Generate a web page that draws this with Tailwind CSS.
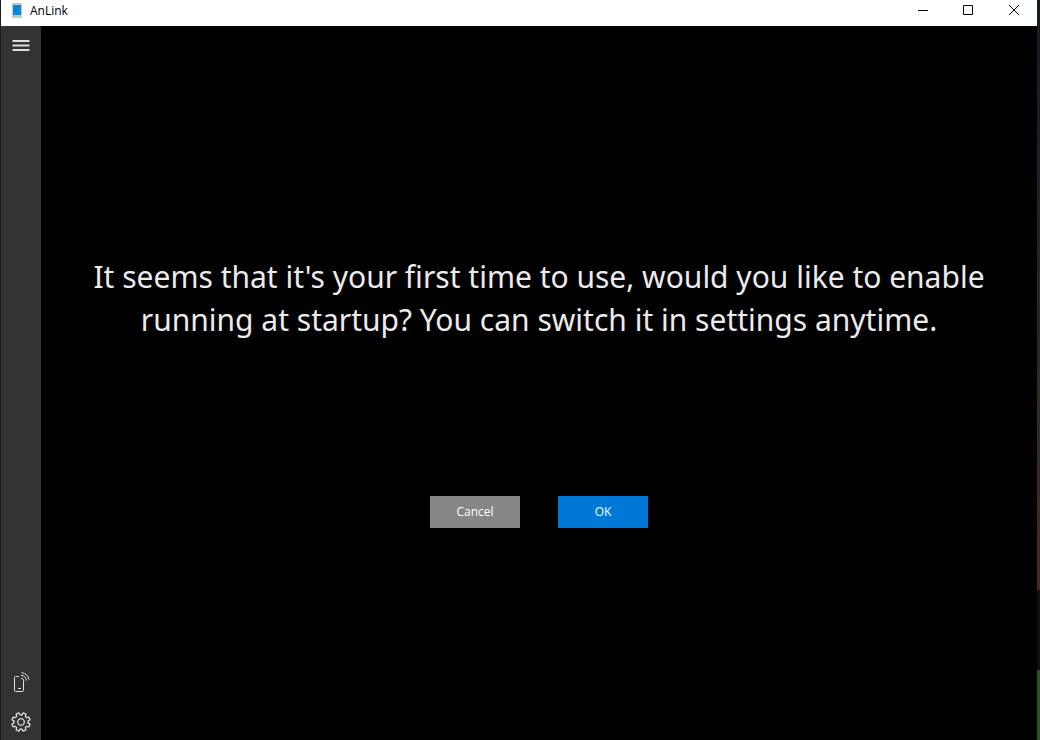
<!DOCTYPE html>
<html lang="en">
<head>
<meta charset="utf-8">
<title>AnLink</title>
<script src="https://cdn.jsdelivr.net/npm/@tailwindcss/browser@4"></script>
</head>
<body class="flex min-h-screen bg-[#1d1d1d] pl-px font-['Noto_Sans','Open_Sans',sans-serif]">
<div class="flex min-w-0 flex-1 flex-col bg-black">
  <header class="flex h-[26px] items-start justify-between bg-white text-black">
    <div class="flex h-[22px] items-center gap-2 pl-[11px]">
      <svg class="h-4 w-[10px]" viewBox="0 0 10 16" aria-hidden="true">
        <rect y="-1" width="10" height="16" rx="1" fill="#b9cad3"/>
        <rect x="1" y="2" width="8" height="10" fill="#0c8bdc"/>
        <path d="M3 9a3 3 0 0 1 3-3M3 6a5 5 0 0 1 5-3" fill="none" stroke="#0874bd"/>
      </svg>
      <h1 class="font-['Open_Sans','Noto_Sans',sans-serif] text-xs">AnLink</h1>
    </div>
    <div class="flex">
      <button class="flex h-5 w-11 items-center justify-center" aria-label="Minimize">
        <svg class="size-[10px]" viewBox="0 0 10 10" fill="none" stroke="#000"><path d="M0 5.5h10"/></svg>
      </button>
      <button class="flex h-5 w-[46px] items-center justify-center" aria-label="Maximize">
        <svg class="size-[10px]" viewBox="0 0 10 10" fill="none" stroke="#000"><path d="M.5.5h9v9h-9z"/></svg>
      </button>
      <button class="flex h-5 w-[46px] items-center justify-center" aria-label="Close">
        <svg class="size-[10px]" viewBox="0 0 10 10" fill="none" stroke="#000"><path d="M0 0l10 10M10 0L0 10"/></svg>
      </button>
    </div>
  </header>
  <div class="flex flex-1">
    <nav class="flex w-10 flex-col bg-[#333333] text-[#dedede]" aria-label="Main">
      <button class="flex h-10 items-center justify-center" aria-label="Menu">
        <svg class="h-3 w-[18px]" viewBox="0 0 18 12" fill="none" stroke="currentColor" stroke-width="2"><path d="M.5 1h17M.5 5.500h17M.5 10h17"/></svg>
      </button>
      <button class="mt-auto flex h-11 items-center justify-center" aria-label="Connect device">
        <svg class="size-5" viewBox="0 0 20 20" fill="none" stroke="currentColor">
          <path d="M8 4.500H4.500a1 1 0 0 0-1 1v13a1 1 0 0 0 1 1h7a1 1 0 0 0 1-1V9M7 16.500h3"/>
          <path d="M10 6a3.500 3.500 0 0 1 3 3M10 3.300a6 6 0 0 1 5.500 5.200M10.500.7a8.500 8.500 0 0 1 7.500 7"/>
        </svg>
      </button>
      <button class="flex h-9 items-center justify-center" aria-label="Settings">
        <svg class="size-5" viewBox="-10 -10 20 20" fill="none" stroke="currentColor" stroke-width="1.300" stroke-linejoin="round" stroke-linecap="round">
          <circle r="3.300"/>
          <path id="tooth" d="M7.050.87L9.040 2.170 7.930 4.860 5.590 4.370 4.370 5.590"/>
          <use href="#tooth" transform="rotate(45)"/>
          <use href="#tooth" transform="rotate(90)"/>
          <use href="#tooth" transform="rotate(135)"/>
          <use href="#tooth" transform="rotate(180)"/>
          <use href="#tooth" transform="rotate(225)"/>
          <use href="#tooth" transform="rotate(270)"/>
          <use href="#tooth" transform="rotate(315)"/>
        </svg>
      </button>
    </nav>
    <main class="flex flex-1 flex-col items-center justify-center gap-[155px] px-10 pt-[17px]">
      <p class="text-center text-[30px] leading-[43px] text-[#ebebeb]">It seems that it's your first time to use, would you like to enable<br>running at startup? You can switch it in settings anytime.</p>
      <div class="flex gap-[38px] font-['Open_Sans','Noto_Sans',sans-serif] text-xs text-white">
        <button class="h-8 w-[90px] bg-[#868686]">Cancel</button>
        <button class="h-8 w-[90px] bg-[#0078d7]">OK</button>
      </div>
    </main>
  </div>
</div>
<div class="flex w-[3px] flex-col" aria-hidden="true">
  <div class="flex-[59] bg-linear-to-b from-[#131a22] via-[#24282b] to-[#4a2818]"></div>
  <div class="flex-[8] bg-[#101010]"></div>
  <div class="flex-[7] bg-[#2c5416]"></div>
</div>
</body>
</html>
